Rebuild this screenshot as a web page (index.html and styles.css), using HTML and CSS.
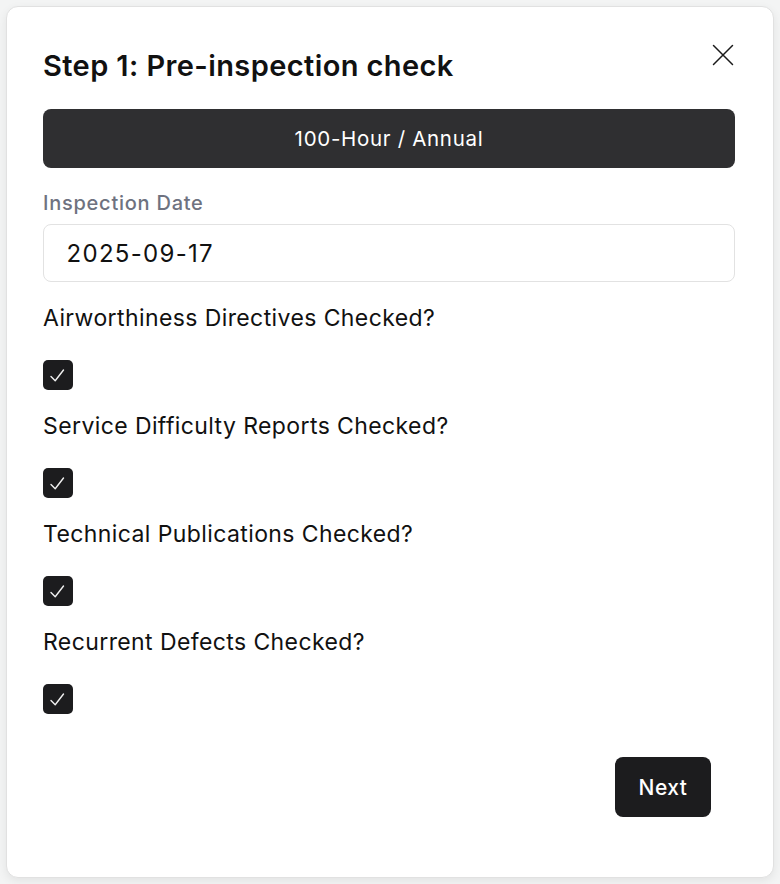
FILE: index.html
```html
<!DOCTYPE html>
<html lang="en">
<head>
<meta charset="utf-8">
<title>Step 1: Pre-inspection check</title>
<link rel="stylesheet" href="styles.css">
</head>
<body>
<div class="modal">
  <div class="header">
    <h1 class="title">Step 1: Pre-inspection check</h1>
    <button class="close" aria-label="Close">
      <svg width="26" height="26" viewBox="0 0 26 26"><path d="M3.5 3.5 L22.5 22.5 M22.5 3.5 L3.5 22.5" stroke="#1a1a1a" stroke-width="1.5" fill="none" stroke-linecap="round"/></svg>
    </button>
  </div>
  <div class="type-bar">100-Hour / Annual</div>
  <label class="field-label">Inspection Date</label>
  <div class="date-input">2025-09-17</div>

  <div class="question">Airworthiness Directives Checked?</div>
  <div class="checkbox"><svg width="30" height="30" viewBox="0 0 30 30"><path d="M8 16.5 L12.2 20.8 L20.5 10" stroke="#f0f0f0" stroke-width="1.4" fill="none" stroke-linecap="round" stroke-linejoin="round"/></svg></div>

  <div class="question">Service Difficulty Reports Checked?</div>
  <div class="checkbox"><svg width="30" height="30" viewBox="0 0 30 30"><path d="M8 16.5 L12.2 20.8 L20.5 10" stroke="#f0f0f0" stroke-width="1.4" fill="none" stroke-linecap="round" stroke-linejoin="round"/></svg></div>

  <div class="question">Technical Publications Checked?</div>
  <div class="checkbox"><svg width="30" height="30" viewBox="0 0 30 30"><path d="M8 16.5 L12.2 20.8 L20.5 10" stroke="#f0f0f0" stroke-width="1.4" fill="none" stroke-linecap="round" stroke-linejoin="round"/></svg></div>

  <div class="question">Recurrent Defects Checked?</div>
  <div class="checkbox"><svg width="30" height="30" viewBox="0 0 30 30"><path d="M8 16.5 L12.2 20.8 L20.5 10" stroke="#f0f0f0" stroke-width="1.4" fill="none" stroke-linecap="round" stroke-linejoin="round"/></svg></div>

  <div class="footer">
    <button class="next">Next</button>
  </div>
</div>
</body>
</html>
```

FILE: styles.css
```css
* { box-sizing: border-box; }
html, body { margin: 0; padding: 0; }
body {
  background: #f3f4f4;
  font-family: Inter, "Noto Sans", "Liberation Sans", sans-serif;
  color: #111;
  width: 780px;
  height: 884px;
  overflow: hidden;
}
.modal {
  margin: 6px;
  width: 768px;
  height: 872px;
  background: #fff;
  border: 1px solid #e1e1e1;
  border-radius: 12px;
  box-shadow: 0 3px 10px rgba(0,0,0,0.07);
  padding: 35px 38px 0 36px;
  display: flex;
  flex-direction: column;
}
.header {
  display: flex;
  justify-content: space-between;
  align-items: flex-start;
}
.title {
  margin: 7px 0 0 0;
  font-size: 29px;
  line-height: 34px;
  font-weight: 600;
  color: #111;
  letter-spacing: 0.4px;
}
.close {
  width: 26px;
  height: 26px;
  padding: 0;
  margin: 0 -1px 0 0;
  border: none;
  background: transparent;
  display: flex;
}
.type-bar {
  margin-top: 26px;
  height: 59px;
  background: #2f2f31;
  border-radius: 8px;
  color: #fff;
  font-size: 20.5px;
  display: flex;
  align-items: center;
  justify-content: center;
  letter-spacing: 0.7px;
}
.field-label {
  display: block;
  margin-top: 23px;
  font-size: 20px;
  line-height: 24px;
  color: #6e7280;
  font-weight: 500;
  letter-spacing: 0.75px;
}
.date-input {
  margin-top: 9px;
  height: 58px;
  border: 1.5px solid #e2e2e2;
  border-radius: 8px;
  padding-left: 22.5px;
  display: flex;
  align-items: center;
  font-size: 24px;
  letter-spacing: 1.3px;
  color: #111;
}
.question {
  margin-top: 22px;
  font-size: 23px;
  line-height: 28px;
  color: #111;
  letter-spacing: 0.4px;
}
.checkbox {
  margin-top: 28px;
  width: 30px;
  height: 30px;
  border-radius: 5px;
  background: #1c1c1e;
  display: flex;
}
.footer {
  margin-top: 43px;
  display: flex;
  justify-content: flex-end;
  padding-right: 24px;
}
.next {
  width: 96px;
  height: 60px;
  border: none;
  border-radius: 8px;
  background: #1c1c1e;
  color: #fff;
  font-family: inherit;
  font-size: 21px;
  font-weight: 500;
  letter-spacing: 0.5px;
  padding: 0;
}
```
